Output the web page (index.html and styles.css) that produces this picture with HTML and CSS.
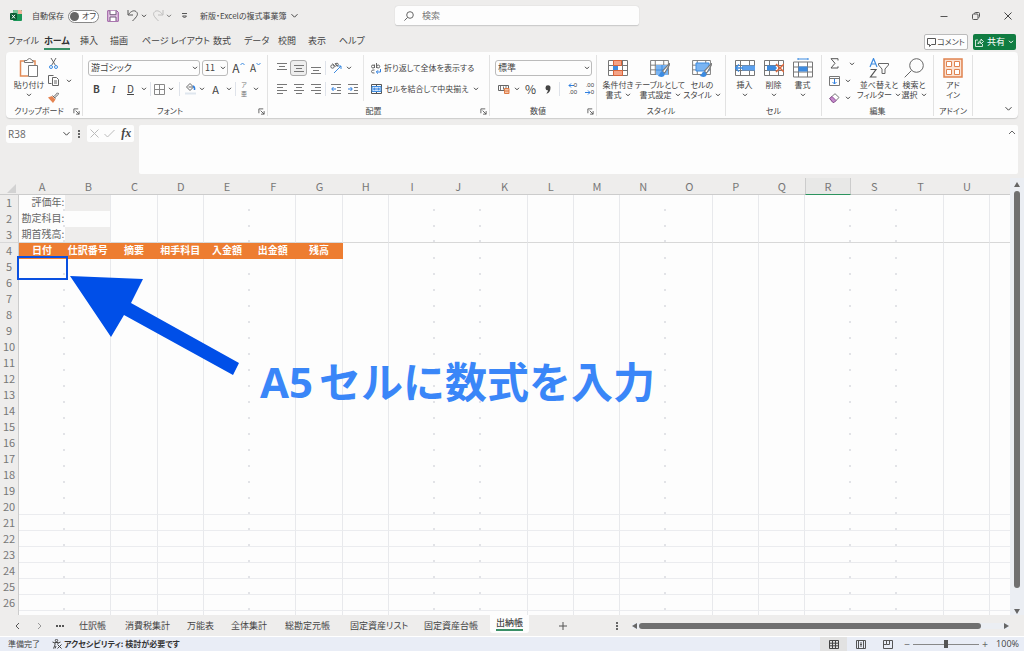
FILE: index.html
```html
<!DOCTYPE html>
<html lang="ja">
<head>
<meta charset="utf-8">
<title>新版・Excelの複式事業簿</title>
<link rel="stylesheet" href="styles.css">
</head>
<body>
<svg class="sprite" aria-hidden="true">
  <symbol id="chev" viewBox="0 0 6 4"><path d="M1 .8 3 2.8 5 .8" fill="none" stroke="currentColor" vector-effect="non-scaling-stroke"/></symbol>
  <symbol id="launch" viewBox="0 0 8 8"><path d="M1 6V1h5M3 3l4 4M7 3.500V7H3.500" fill="none" stroke="#555"/></symbol>
  <symbol id="al-left" viewBox="0 0 10 10"><path d="M0 .5h10M0 3.500h6M0 6.500h10M0 9.500h6" fill="none" stroke="#777"/></symbol>
  <symbol id="al-mid" viewBox="0 0 10 10"><path d="M0 .5h10M2 3.500h6M0 6.500h10M2 9.500h6" fill="none" stroke="#777"/></symbol>
  <symbol id="al-right" viewBox="0 0 10 10"><path d="M0 .5h10M4 3.500h6M0 6.500h10M4 9.500h6" fill="none" stroke="#777"/></symbol>
  <symbol id="v-line" viewBox="0 0 10 7"><path d="M0 .5h10M2 3.500h6M0 6.500h10" fill="none" stroke="#777"/></symbol>
  <symbol id="indent-out" viewBox="0 0 10 10"><path d="M0 .5h10M6 3.500h4M6 6.500h4M0 9.500h10" stroke="#777" fill="none"/><path d="M5 5H1M2.500 3 .7 5l1.800 2" stroke="#2f7fe0" fill="none"/></symbol>
  <symbol id="indent-in" viewBox="0 0 10 10"><path d="M0 .5h10M6 3.500h4M6 6.500h4M0 9.500h10" stroke="#777" fill="none"/><path d="M0 5h4M2.500 3l1.800 2-1.800 2" stroke="#2f7fe0" fill="none"/></symbol>
  <symbol id="grid3" viewBox="0 0 20 16"><path d="M.5.5h19v15H.5zM.5 5.500h19M.5 10.500h19M5.500.5v15M14.500.5v15" fill="#fff" stroke="#777"/></symbol>
  <symbol id="brush" viewBox="0 0 12 14"><path d="M11.500.5 5 7.500l2 2L11.500 2z" fill="#fff" stroke="#777"/><path d="M5 8C2.500 8 3 11 .5 12c3 2 7 1 6.500-2z" fill="#3d8be0"/></symbol>
</svg>

<header class="titlebar">
  <div class="title-left">
    <svg class="app" width="12" height="12" viewBox="0 0 12 12"><rect x="3" y="0" width="9" height="11" rx="1" fill="#1a9657"/><path d="M4 0h4v4H3V1z" fill="#7cc79b"/><path d="M8 0h3l1 1v3H8z" fill="#f0b49a"/><rect x="0" y="3" width="7" height="7" rx="1" fill="#0d5c33"/><path d="m2 4.800 3 3.600m0-3.600L2 8.400" stroke="#fff"/></svg>
    <label class="autosave" for="autosave">自動保存</label>
    <span class="switch"><input type="checkbox" id="autosave"><span>オフ</span></span>
    <button class="ic save" aria-label="上書き保存"><svg width="12" height="12" viewBox="0 0 12 12"><path d="M.7.7h9l1.600 1.600v9H.7z" fill="#e4c4e6" stroke="#9a5ba0"/><path d="M3 .7v4h6v-4M3 11V7h6v4" fill="#fff" stroke="#6f5a78"/></svg></button>
    <button class="ic undo" aria-label="元に戻す"><svg width="12" height="12" viewBox="0 0 12 12"><path d="M1 0v5h5M1.500 4.500C4 1 7 0 9 1.500c3 2.500 1 5-3.500 9.500" fill="none" stroke="#555"/></svg></button>
    <button class="ic drop" aria-label="元に戻す履歴"><svg width="6" height="4"><use href="#chev"/></svg></button>
    <button class="ic undo off" aria-label="やり直し"><svg width="12" height="12" viewBox="0 0 12 12"><path d="M11 0v5H6M10.500 4.500C8 1 5 0 3 1.500 0 4 2 6.500 6.500 11" fill="none" stroke="#aaa"/></svg></button>
    <button class="ic drop off" aria-label="やり直し履歴"><svg width="6" height="4"><use href="#chev"/></svg></button>
    <button class="ic qat" aria-label="クイックアクセスのカスタマイズ"><svg width="7" height="6" viewBox="0 0 7 6"><path d="M1 .5h5M1.500 3h4l-2 2z" fill="none" stroke="#555"/></svg></button>
    <button class="doc">新版・Excelの複式事業簿<svg width="9" height="6"><use href="#chev"/></svg></button>
  </div>
  <div class="search">
    <svg width="10" height="10" viewBox="0 0 10 10"><circle cx="6" cy="4" r="3.300" fill="none" stroke="#666"/><path d="M3.600 6.400.4 9.600" stroke="#666"/></svg>
    <input type="search" aria-label="検索" placeholder="検索">
  </div>
  <div class="window">
    <button aria-label="最小化"><svg width="8" height="8" viewBox="0 0 8 8"><path d="M.5 4.500h7" stroke="#555"/></svg></button>
    <button aria-label="元のサイズに戻す"><svg width="8" height="8" viewBox="0 0 8 8"><rect x=".5" y="2" width="5.500" height="5.500" rx="1" fill="none" stroke="#555"/><path d="M2.500 1.800V1.500Q2.500.5 3.500.5h3q1 0 1 1v3q0 1-1 1" fill="none" stroke="#555"/></svg></button>
    <button aria-label="閉じる"><svg width="8" height="8" viewBox="0 0 8 8"><path d="m.5.5 7 7m0-7-7 7" stroke="#444"/></svg></button>
  </div>
</header>

<nav class="tabs">
  <div class="tablist">
    <button>ファイル</button><button class="on">ホーム</button><button>挿入</button><button>描画</button><button>ページ レイアウト</button><button>数式</button><button>データ</button><button>校閲</button><button>表示</button><button>ヘルプ</button>
  </div>
  <button class="comment"><svg width="9" height="9" viewBox="0 0 9 9"><path d="M.5.500h8v6H4.500l-2 2v-2h-2z" fill="none" stroke="#555"/></svg>コメント</button>
  <button class="share"><svg width="9" height="9" viewBox="0 0 9 9"><path d="M3 2H.5v6.500h7V6M3 6c0-2 1-3 3-3V1l2.500 2.500L6 6V4.500C4.500 4.500 3.500 5 3 6z" fill="none" stroke="#fff" stroke-width=".8"/></svg>共有<svg width="6" height="4"><use href="#chev"/></svg></button>
</nav>

<section class="ribbon">
  <div class="group g-clip">
    <div class="body">
      <button class="big paste"><svg width="20" height="20" viewBox="0 0 20 20"><path d="M6 3H1.500v15H9M13 3h3v4" fill="none" stroke="#e28a55" stroke-width="1.500"/><path d="M5.500 4.500V2.500h2.500Q9 .5 10.500.500T13 2.500h1v2zM9.500 7.500h9v11h-9z" fill="#fff" stroke="#777"/></svg><span>貼り付け</span><svg class="cv" width="6" height="4"><use href="#chev"/></svg></button>
      <div class="stack">
        <div><button class="ic" aria-label="切り取り"><svg width="9" height="11" viewBox="0 0 9 11"><path d="m2 0 4.500 7.500M7 0 2.500 7.500" stroke="#666"/><circle cx="2" cy="9" r="1.500" fill="none" stroke="#3d8be0"/><circle cx="7" cy="9" r="1.500" fill="none" stroke="#3d8be0"/></svg></button></div>
        <div><button class="ic" aria-label="コピー"><svg width="11" height="11" viewBox="0 0 11 11"><path d="M3.500 8.500h-3v-8h5M4.500 2.500h4l2 2v6h-6zM6 6h3M6 8h3" fill="none" stroke="#666"/></svg></button><button class="ic drop copy" aria-label="コピーのオプション"><svg width="6" height="4"><use href="#chev"/></svg></button></div>
        <div><button class="ic" aria-label="書式のコピー"><svg width="11" height="11" viewBox="0 0 11 11"><path d="M0 5.500 4 4l3.500 3.500L5 11z" fill="#e58350"/><path d="m4.500 3.500 3 3M6 4.500 9.500.800l1.200 1.200L7 5.500" fill="#fff" stroke="#666"/></svg></button></div>
      </div>
    </div>
    <div class="cap"><span>クリップボード</span><button aria-label="クリップボードの詳細"><svg width="7" height="7"><use href="#launch"/></svg></button></div>
  </div>

  <div class="group g-font">
    <div class="body rows">
      <div class="row">
        <span class="sel font"><select aria-label="フォント"><option>游ゴシック</option></select><svg width="6" height="4"><use href="#chev"/></svg></span>
        <span class="sel size"><select aria-label="フォント サイズ"><option>11</option></select><svg width="6" height="4"><use href="#chev"/></svg></span>
        <button class="ic letter" aria-label="フォント サイズの拡大">A<svg width="5" height="4" viewBox="0 0 5 4"><path d="M.5 3 2.500 1l2 2" fill="none" stroke="#3d8be0"/></svg></button>
        <button class="ic letter small" aria-label="フォント サイズの縮小">A<svg width="5" height="4" viewBox="0 0 5 4"><path d="m.5 1 2 2 2-2" fill="none" stroke="#3d8be0"/></svg></button>
      </div>
      <div class="row">
        <button class="ic"><b>B</b></button><button class="ic it">I</button><button class="ic ul">D</button><button class="ic drop" aria-label="下線の種類"><svg width="6" height="4"><use href="#chev"/></svg></button><i class="sep"></i>
        <button class="ic n" aria-label="罫線"><svg width="11" height="11" viewBox="0 0 11 11"><path d="M.5.5h10v10H.5zM5.500.5v10M.5 5.500h10" fill="none" stroke="#888"/></svg></button><button class="ic drop" aria-label="罫線の種類"><svg width="6" height="4"><use href="#chev"/></svg></button><i class="sep wide"></i>
        <button class="ic n" aria-label="塗りつぶしの色"><svg width="11" height="12" viewBox="0 0 11 12"><path d="M5 .5 8.500 4 5 7.500 1.500 4zM3.500 4h4" fill="none" stroke="#666"/><path d="M8 3q2 1 1.500 4" fill="none" stroke="#2f7fe0" stroke-width="1.500"/><path d="M0 9.500h11v2H0z" fill="#dfe6ee"/></svg></button><button class="ic drop" aria-label="塗りつぶしの色の一覧"><svg width="6" height="4"><use href="#chev"/></svg></button>
        <button class="ic fa">A</button><button class="ic drop" aria-label="フォントの色の一覧"><svg width="6" height="4"><use href="#chev"/></svg></button><i class="sep"></i>
        <button class="ic n ruby"><span>ア</span><span>亜</span></button><button class="ic drop" aria-label="ふりがなのオプション"><svg width="6" height="4"><use href="#chev"/></svg></button>
      </div>
    </div>
    <div class="cap"><span>フォント</span><button aria-label="フォントの詳細"><svg width="7" height="7"><use href="#launch"/></svg></button></div>
  </div>

  <div class="group g-align">
    <div class="body">
      <div class="rows a-left">
        <div class="row">
          <button class="ic top" aria-label="上揃え"><svg width="10" height="7"><use href="#v-line"/></svg></button><button class="ic pressed" aria-label="上下中央揃え"><svg width="10" height="7"><use href="#v-line"/></svg></button><button class="ic bottom" aria-label="下揃え"><svg width="10" height="7"><use href="#v-line"/></svg></button><i class="sep"></i>
          <button class="ic" aria-label="方向"><svg width="12" height="12" viewBox="0 0 12 12"><circle cx="2.500" cy="4.500" r="1.700" fill="none" stroke="#666"/><path d="m2.500 1.500 3 3.500M5 1l2.500 3.500" stroke="#666"/><circle cx="7" cy="2.500" r="1.300" fill="none" stroke="#666"/><path d="m4 11 7-7M8 4h3v3" fill="none" stroke="#3d8be0"/></svg></button><button class="ic drop" aria-label="方向の種類"><svg width="6" height="4"><use href="#chev"/></svg></button>
        </div>
        <div class="row">
          <button class="ic" aria-label="左揃え"><svg width="10" height="10"><use href="#al-left"/></svg></button><button class="ic" aria-label="中央揃え"><svg width="10" height="10"><use href="#al-mid"/></svg></button><button class="ic" aria-label="右揃え"><svg width="10" height="10"><use href="#al-right"/></svg></button><i class="sep"></i>
          <button class="ic" aria-label="インデントを減らす"><svg width="10" height="10"><use href="#indent-out"/></svg></button><button class="ic" aria-label="インデントを増やす"><svg width="10" height="10"><use href="#indent-in"/></svg></button>
        </div>
      </div>
      <div class="rows a-right">
        <div class="row"><button class="text"><svg width="10" height="11" viewBox="0 0 10 11"><circle cx="2" cy="3.500" r="1.500" fill="none" stroke="#666"/><path d="M3.500 1.500V5M5.500 0v5" stroke="#666"/><circle cx="7.200" cy="3.500" r="1.500" fill="none" stroke="#666"/><path d="M3.500 7Q.5 6.500.5 8.500t3 1.500" fill="none" stroke="#666"/><path d="M9.500 6v3H5.500M7 7.300 5.300 9 7 10.700" fill="none" stroke="#2f7fe0"/></svg>折り返して全体を表示する</button></div>
        <div class="row"><button class="text"><svg width="11" height="10" viewBox="0 0 11 10"><path d="M.5.5h10v9H.5zM5.500.5v9" fill="none" stroke="#555"/><path d="M1 2.500h9v5H1z" fill="#d3e6fa" stroke="#3d8be0"/><path d="M2.500 5h6M4 3.800 2.500 5 4 6.200M7 3.800 8.500 5 7 6.200" fill="none" stroke="#2f7fe0"/></svg>セルを結合して中央揃え</button><button class="ic drop end" aria-label="結合のオプション"><svg width="6" height="4"><use href="#chev"/></svg></button></div>
      </div>
    </div>
    <div class="cap"><span>配置</span><button aria-label="配置の詳細"><svg width="7" height="7"><use href="#launch"/></svg></button></div>
  </div>

  <div class="group g-num">
    <div class="body rows">
      <div class="row"><span class="sel num"><select aria-label="数値の書式"><option>標準</option></select><svg width="6" height="4"><use href="#chev"/></svg></span></div>
      <div class="row">
        <button class="ic" aria-label="通貨表示形式"><svg width="12" height="10" viewBox="0 0 12 10"><path d="M.5 1.500h10v5H.5z" fill="none" stroke="#666"/><path d="M2.500 2v4M5.500 2.500v3M8 2v3" stroke="#777"/><path d="M6.500 4.500H11v5H6.500z" fill="#f6c5a8" stroke="#dd7a44"/><path d="M6.500 7H11" stroke="#dd7a44"/></svg></button><button class="ic drop" aria-label="通貨の種類"><svg width="6" height="4"><use href="#chev"/></svg></button>
        <button class="ic pct">%</button><button class="ic" aria-label="桁区切り"><svg width="6" height="9" viewBox="0 0 6 9"><path d="M5.500 2.800C5.500 6 4 8 1.500 8.800 1 8.500 3 7 3 5.200A2.500 2.500 0 1 1 5.500 2.800z" fill="#444"/></svg></button><i class="sep wide"></i>
        <button class="ic n dec" aria-label="小数点以下の表示桁数を増やす"><span><svg width="6" height="5" viewBox="0 0 6 5"><path d="M6 2.500H1M3 .5l-2 2 2 2" fill="none" stroke="#2f7fe0"/></svg>0</span><span>.00</span></button><button class="ic dec" aria-label="小数点以下の表示桁数を減らす"><span>.00</span><span><svg width="6" height="5" viewBox="0 0 6 5"><path d="M0 2.500h5M3 .5l2 2-2 2" fill="none" stroke="#2f7fe0"/></svg>0</span></button>
      </div>
    </div>
    <div class="cap"><span>数値</span><button aria-label="数値の詳細"><svg width="7" height="7"><use href="#launch"/></svg></button></div>
  </div>

  <div class="group g-style">
    <div class="body">
      <button class="big"><svg width="20" height="20" viewBox="0 0 20 20"><use href="#grid3" y="2" width="20" height="16"/><path d="M5.500 2.500h8v5h-8zM5.500 12.500h9v5h-9z" fill="#f3a387" stroke="#d9653a"/><path d="M5 8h5v4H5z" fill="#3d8be0"/></svg><span>条件付き</span><span>書式<svg width="6" height="4"><use href="#chev"/></svg></span></button>
      <button class="big"><svg width="21" height="20" viewBox="0 0 21 20"><use href="#grid3" y="2" width="19" height="15"/><path d="M6 7h12v10H6z" fill="#7ab4f2"/><path d="M6 12h12M12 7v10" stroke="#3d8be0"/><use href="#brush" x="7" y="5" width="13" height="15"/></svg><span>テーブルとして</span><span>書式設定<svg width="6" height="4"><use href="#chev"/></svg></span></button>
      <button class="big"><svg width="21" height="20" viewBox="0 0 21 20"><use href="#grid3" y="2" width="19" height="15"/><path d="M4 5h13v8H4z" fill="#7ab4f2" stroke="#3d8be0"/><use href="#brush" x="7" y="5" width="13" height="15"/></svg><span>セルの</span><span>スタイル<svg width="6" height="4"><use href="#chev"/></svg></span></button>
    </div>
    <div class="cap"><span>スタイル</span></div>
  </div>

  <div class="group g-cell">
    <div class="body">
      <button class="big"><svg width="20" height="20" viewBox="0 0 20 20"><use href="#grid3" y="2" width="20" height="16"/><path d="M7 7.500h13v5H7z" fill="#5ba0ee"/><path d="M8 10H1M4 6.500.5 10 4 13.500" fill="none" stroke="#3d8be0" stroke-width="1.500"/></svg><span>挿入</span><svg class="cv" width="6" height="4"><use href="#chev"/></svg></button>
      <button class="big"><svg width="20" height="20" viewBox="0 0 20 20"><use href="#grid3" y="2" width="20" height="16"/><path d="M3 7.500h8L13 10l-2 2.500H3z" fill="#3d8be0"/><path d="m12 6 8 8m0-8-8 8" stroke="#e0663a" stroke-width="1.500"/></svg><span>削除</span><svg class="cv" width="6" height="4"><use href="#chev"/></svg></button>
      <button class="big"><svg width="20" height="20" viewBox="0 0 20 20"><use href="#grid3" y="3" width="20" height="17"/><path d="M5.500 8.500h9v5h-9z" fill="#3d8be0"/><path d="M5 1h10M5 0v2M15 0v2" stroke="#3d8be0"/></svg><span>書式</span><svg class="cv" width="6" height="4"><use href="#chev"/></svg></button>
    </div>
    <div class="cap"><span>セル</span></div>
  </div>

  <div class="group g-edit">
    <div class="body">
      <div class="stack">
        <div><button class="ic" aria-label="オート SUM"><svg width="9" height="11" viewBox="0 0 9 11"><path d="M8 2.500V.7H1L5 5.300 1 10h7V8.300" fill="none" stroke="#555"/></svg></button><button class="ic drop far" aria-label="オート SUM のオプション"><svg width="6" height="4"><use href="#chev"/></svg></button></div>
        <div><button class="ic" aria-label="フィル"><svg width="11" height="10" viewBox="0 0 11 10"><path d="M.5.500h10v9H.5zM.5 2.500h10" fill="none" stroke="#777"/><path d="M5.500 3v5M3.500 6l2 2 2-2" fill="none" stroke="#2f7fe0"/></svg></button><button class="ic drop" aria-label="フィルのオプション"><svg width="6" height="4"><use href="#chev"/></svg></button></div>
        <div><button class="ic" aria-label="クリア"><svg width="11" height="10" viewBox="0 0 11 10"><path d="M.7 5.500 6 .7 10 4.500 5 9.500H4z" fill="#fff" stroke="#777"/><path d="M.7 5.500 3 3.500l4 4-2 2H4z" fill="#c58acb" stroke="#8d4f95"/></svg></button><button class="ic drop" aria-label="クリアのオプション"><svg width="6" height="4"><use href="#chev"/></svg></button></div>
      </div>
      <button class="big sort"><svg width="20" height="20" viewBox="0 0 20 20"><path d="M1 9 4.500.5 8 9M2.200 6h4.600" fill="none" stroke="#3d8be0" stroke-width="1.200"/><path d="M1.500 11.500h5.500L1.500 19H7.500" fill="none" stroke="#555" stroke-width="1.200"/><path d="M9.500 5.500h10v1.500L16 11v4.500h-3V11L9.500 7z" fill="none" stroke="#666"/></svg><span>並べ替えと</span><span>フィルター<svg width="6" height="4"><use href="#chev"/></svg></span></button>
      <button class="big find"><svg width="20" height="20" viewBox="0 0 20 20"><circle cx="12.500" cy="7.500" r="6.800" fill="none" stroke="#666"/><path d="M7.500 12.500.7 19.300" stroke="#666"/></svg><span>検索と</span><span>選択<svg width="6" height="4"><use href="#chev"/></svg></span></button>
    </div>
    <div class="cap"><span>編集</span></div>
  </div>

  <div class="group g-addin">
    <div class="body">
      <button class="big"><svg width="20" height="20" viewBox="0 0 20 20"><path d="M1 1h18v18H1z" fill="#fbe3d4" stroke="#e0834f" stroke-width="1.500"/><path d="M3.500 3.500h5v5h-5zM11.500 3.500h5v5h-5zM3.500 11.500h5v5h-5zM11.500 11.500h5v5h-5z" fill="#fff" stroke="#e0834f"/></svg><span>アド</span><span>イン</span></button>
    </div>
    <div class="cap"><span>アドイン</span></div>
  </div>
  <button class="collapse" aria-label="リボンを折りたたむ"><svg width="9" height="6"><use href="#chev"/></svg></button>
</section>

<section class="formula">
  <div class="namebox"><input aria-label="名前ボックス" value="R38"><svg width="9" height="6"><use href="#chev"/></svg></div>
  <svg class="dots" width="2" height="8" viewBox="0 0 2 8"><path d="M0 0h2v2H0zM0 3h2v2H0zM0 6h2v2H0z" fill="#666"/></svg>
  <div class="fx">
    <button aria-label="キャンセル"><svg width="9" height="9" viewBox="0 0 9 9"><path d="m.5.5 8 8m0-8-8 8" stroke="#bbb"/></svg></button>
    <button aria-label="入力"><svg width="11" height="9" viewBox="0 0 11 9"><path d="m.5 5 3 3 7-7" fill="none" stroke="#bbb"/></svg></button>
    <button class="fn">fx</button>
  </div>
  <div class="bar"><textarea aria-label="数式バー"></textarea><svg width="8" height="6" viewBox="0 0 8 6"><path d="m1 5 3-3 3 3" fill="none" stroke="#666"/></svg></div>
</section>

<main class="sheet">
  <div class="cells">
    <table>
      <colgroup><col class="c-num"><col span="21"><col class="c-rest"></colgroup>
      <thead><tr id="letters"></tr></thead>
      <tbody id="rows"></tbody>
    </table>
    <svg class="arrow" width="170" height="100" viewBox="0 0 170 100"><path d="M0 0 73 3 61 27 169 87 163 99 54 39 41 61z" fill="#004fe8"/></svg>
    <p class="note"><span class="ref">A5</span>セルに数式を入力</p>
  </div>
  <div class="vscroll"><i class="up"></i><i class="thumb"></i><i class="down"></i></div>
</main>

<footer class="sheets">
  <div class="sheetlist">
    <button aria-label="前のシート"><svg width="5" height="8" viewBox="0 0 5 8"><path d="M4 1 1 4l3 3" fill="none" stroke="#555"/></svg></button>
    <button aria-label="次のシート"><svg width="5" height="8" viewBox="0 0 5 8"><path d="m1 1 3 3-3 3" fill="none" stroke="#999"/></svg></button>
    <button class="all" aria-label="シート一覧"><svg width="8" height="2" viewBox="0 0 8 2"><path d="M0 0h2v2H0zM3 0h2v2H3zM6 0h2v2H6z" fill="#555"/></svg></button>
    <button class="nm">仕訳帳</button><button class="nm">消費税集計</button><button class="nm">万能表</button><button class="nm">全体集計</button><button class="nm">総勘定元帳</button><button class="nm">固定資産リスト</button><button class="nm">固定資産台帳</button><button class="active"><span>出納帳</span></button>
    <button class="add" aria-label="新しいシート"><svg width="8" height="8" viewBox="0 0 8 8"><path d="M4 0v8M0 4h8" stroke="#555"/></svg></button>
  </div>
  <div class="hscroll">
    <svg width="2" height="8" viewBox="0 0 2 8"><path d="M0 0h2v2H0zM0 3h2v2H0zM0 6h2v2H0z" fill="#666"/></svg>
    <div class="track"><i class="left"></i><i class="hthumb"></i><i class="right"></i></div>
  </div>
</footer>

<div class="status">
  <span>準備完了</span>
  <button class="acc"><svg width="10" height="10" viewBox="0 0 10 10"><circle cx="4.500" cy="1.500" r="1.200" fill="none" stroke="#444"/><path d="M.5 3 3 4v2L1.500 9.500M8.500 3 6 4v1M3 3.500h3M4 7 3 9.500M5.500 5.500l4 4m0-4-4 4" fill="none" stroke="#444"/></svg>アクセシビリティ: 検討が必要です</button>
  <div class="views">
    <button class="cur" aria-label="標準"><svg width="10" height="9" viewBox="0 0 10 9"><path d="M.5.500h9v8h-9zM3.500.5v8M6.500.5v8M.5 3.200h9M.5 5.800h9" fill="none" stroke="#444"/></svg></button>
    <button aria-label="ページ レイアウト"><svg width="10" height="9" viewBox="0 0 10 9"><path d="M.5.500h9v8h-9zM2.500.5v8M7.500.5v8M4 3h2M4 4.500h2M4 6h2" fill="none" stroke="#555"/></svg></button>
    <button aria-label="改ページ プレビュー"><svg width="10" height="9" viewBox="0 0 10 9"><path d="M.5.500h9v8h-9zM3.500.5v4h3v-4M.5 4.500h3" fill="none" stroke="#555"/></svg></button>
    <span class="zm">−</span><input type="range" aria-label="ズーム" min="0" max="100" value="50"><span class="zm">+</span><span class="zoom">100%</span>
  </div>
</div>
<script src="sheet.js"></script>
</body>
</html>
```
FILE: styles.css
```css
* { box-sizing: border-box; }
body {
  margin: 0;
  height: 100vh;
  display: flex;
  flex-direction: column;
  overflow: hidden;
  background: #eeedec;
  color: #444;
  font: 8px/10px "Noto Sans CJK JP", sans-serif;
  font-feature-settings: "palt";
}
button, input, select, textarea { font: inherit; font-feature-settings: inherit; color: inherit; margin: 0; }
button { background: none; border: 0; padding: 0; white-space: nowrap; }
svg { display: block; flex: none; }
.sprite { display: none; }

.titlebar { display: grid; grid-template-columns: 395fr 244fr 385fr; height: 32px; align-items: center; flex: none; }
.title-left { display: flex; align-items: center; padding-left: 10px; white-space: nowrap; }
.app { margin-right: 10px; }
.switch { display: flex; align-items: center; gap: 3px; width: 31px; height: 13px; margin: 0 8px 0 4px; padding-left: 1px; border: 1px solid #888; border-radius: 7px; background: #fff; }
.switch input { appearance: none; flex: none; width: 9px; height: 9px; border-radius: 50%; background: #666; }
.ic { display: inline-flex; align-items: center; justify-content: center; width: 17px; height: 16px; flex: none; }
.ic.drop { width: 10px; }
.ic.n { width: 14px; }
.ic.save { width: 12px; margin-right: 8px; }
.ic.undo { width: 12px; }
.off { opacity: .7; }
.ic.undo.off { margin-left: 3px; }
.ic.qat { width: 16px; margin: 0 8px 0 2px; }
.doc { display: flex; align-items: center; gap: 3px; }
.search { position: relative; height: 20px; }
.search svg { position: absolute; left: 9px; top: 5px; }
.search input { display: block; width: 100%; height: 20px; padding: 0 0 0 27px; border: 0; border-bottom: 1px solid #ccc; border-radius: 3px; background: #fdfdfd; font-size: 9px; outline: 0; box-shadow: 0 0 1px #bbb; }
.search input::placeholder { color: #777; opacity: 1; }
.window { display: flex; justify-content: flex-end; }
.window button { width: 32px; display: flex; justify-content: center; }

.tabs { display: flex; align-items: center; height: 20px; flex: none; padding: 0 8px; gap: 5px; font-size: 9px; }
.tablist { flex: 1; display: grid; grid-template-columns: 36px 36px 30px 32px 71px 31px 34px 30px 31px auto; text-align: left; }
.tablist button { justify-self: start; height: 16px; line-height: 14px; border-bottom: 2px solid transparent; }
.tablist .on { font-weight: 700; border-color: #3a8f66; color: #333; }
.comment, .share { display: flex; align-items: center; justify-content: center; gap: 3px; height: 16px; border-radius: 2px; font-size: 8px; }
.comment { width: 44px; gap: 1px; background: #fdfdfd; border: 1px solid #bbb; }
.share { width: 43px; background: #107c41; color: #fff; font-size: 9px; }

.ribbon { display: flex; flex: none; height: 66px; margin: 0 6px; background: #fdfdfd; border-radius: 4px; box-shadow: 0 1px 1px #ccc; }
.group { flex: none; display: flex; flex-direction: column; margin: 3px 0 2px; border-right: 1px solid #e2e2e2; }
.g-clip { width: 77px; }
.g-font { width: 185px; }
.g-align { width: 222px; }
.g-num { width: 107px; }
.g-style { width: 129px; }
.g-cell { width: 96px; }
.g-edit { width: 112px; }
.g-addin { width: 39px; }
.body { flex: 1; display: flex; }
.cap { position: relative; display: flex; justify-content: center; height: 10px; padding-right: 10px; }
.g-style .cap, .g-cell .cap, .g-edit .cap, .g-addin .cap { padding-right: 0; }
.cap button { position: absolute; right: 2px; top: 2px; }
.big { display: flex; flex-direction: column; align-items: center; width: 42px; padding-top: 3px; align-self: flex-start; }
.big > svg:first-child { margin-bottom: 2px; }
.big span { display: flex; align-items: center; gap: 3px; }
.big .cv { margin-top: 3px; }
.paste { width: 32px; margin: 0 0 0 7px; }
.g-cell .body { padding-left: 4px; }
.g-cell .big { width: 29px; }
.g-addin .big { width: 100%; }
.find { width: 28px; }
.stack { display: flex; flex-direction: column; }
.stack div { display: flex; align-items: center; height: 17px; }
.g-edit .stack { width: 33px; padding-left: 4px; }
.g-edit .sort { margin-left: 3px; }
.drop.far { margin-left: 4px; }
.drop.copy { margin-left: 2px; }
.rows { flex-direction: column; gap: 5px; padding: 5px 0 0 5px; display: flex; }
.row { display: flex; align-items: center; height: 16px; }
.sel { position: relative; display: block; margin-right: 2px; }
.sel select { appearance: none; display: block; width: 100%; height: 16px; padding: 0 0 0 2px; border: 1px solid #bbb; border-radius: 3px; background: #fdfdfd; font-size: 9px; outline: 0; }
.sel svg { position: absolute; right: 2px; top: 6px; }
.font { width: 112px; }
.size { width: 26px; }
.num { width: 97px; }
.letter { font-size: 12px; align-items: flex-start; line-height: 16px; }
.letter.small { font-size: 10px; }
.letter svg { margin-top: 2px; }
.g-font b { font-size: 10px; }
.it { font: italic 11px "Liberation Serif", serif; }
.ul { font-size: 10px; text-decoration: underline; }
.fa { font-size: 11px; }
.ruby { flex-direction: column; font-size: 6px; line-height: 9px; color: #777; }
.sep { width: 1px; height: 14px; margin: 0 1px; background: #dfe3ea; }
.sep.wide { margin: 0 3px; }
.a-left { width: 96px; border-right: 1px solid #e6e6e6; margin-bottom: 5px; }
.a-right { padding-left: 7px; flex: 1; }
.pressed { border: 1px solid #aaa; border-radius: 3px; background: #eee; }
.ic.top { align-items: flex-start; padding-top: 3px; }
.ic.bottom { align-items: flex-end; padding-bottom: 2px; }
.text { display: flex; align-items: center; gap: 3px; }
.end { margin-left: auto; margin-right: 8px; }
.pct { font-size: 12px; }
.dec { flex-direction: column; font: 6px/7px "Liberation Sans", sans-serif; align-items: flex-end; }
.dec span { display: flex; align-items: center; }
.collapse { margin: auto 5px 6px auto; }

.formula { display: flex; align-items: flex-start; flex: none; height: 56px; padding: 0 6px; margin-top: 7px; }
.namebox { position: relative; width: 66px; height: 18px; }
.namebox input { display: block; width: 100%; height: 18px; padding: 0 2px; border: 0; border-radius: 3px; background: #fdfdfd; font-family: "Open Sans", sans-serif; font-size: 10px; outline: 0; color: #666; }
.namebox svg { position: absolute; right: 1px; top: 6px; }
.dots { margin: 5px 6px; }
.fx { display: flex; align-items: center; justify-content: space-around; width: 47px; height: 17px; margin: 0 5px 0 1px; background: #fdfdfd; border-radius: 2px; }
.fn { font: italic bold 12px "Liberation Serif", serif; }
.bar { flex: 1; position: relative; height: 49px; }
.bar textarea { display: block; width: 100%; height: 49px; border: 0; border-radius: 2px; background: #fdfdfd; resize: none; outline: 0; font-size: 10px; }
.bar svg { position: absolute; right: 2px; top: 4px; }

.sheet { flex: 1; min-height: 0; display: flex; margin-top: -3px; }
.cells { flex: 1; position: relative; overflow: hidden; }
table { width: 100%; table-layout: fixed; border-collapse: separate; border-spacing: 0; font-size: 10px; line-height: 14px; }
.c-num { width: 19px; }
.c-rest { width: 20px; }
th, td { padding: 0; height: 16px; white-space: nowrap; overflow: visible; vertical-align: top; }
th { font-weight: 400; font-size: 11px; color: #777; }
thead th { height: 17px; border-bottom: 1px solid #ccc; vertical-align: middle; }
thead .cur { background: #e8e8e7; border-left: 1px solid #ccc; border-right: 1px solid #ccc; border-bottom-color: #2c935e; }
.corner svg { margin: 5px 0 0 7px; }
tbody th { border-right: 1px solid #ccc; }
td { position: relative; background: #fdfdfd; border-right: 1px solid #e8e9ec; color: #666; }
td.dot { border-right: 0; background: #fdfdfd linear-gradient(#e2e3e7, #e2e3e7) right bottom / 2px 2px no-repeat; }
td:last-child { border-right: 0; }
.frozen td, .frozen th { border-bottom: 1px solid #d8d8d8; }
.lined td { border-bottom: 1px solid #ebecef; }
td.label { text-align: right; padding-right: 1px; }
td.gray { background: #eeedec; }
td.head { background: #ed7d31; color: #fff; border-color: #ed7d31; font-weight: 700; text-align: center; }
td.picked::after { content: ""; position: absolute; left: -2px; top: -3px; right: -3px; height: 20px; border: 2px solid #0a50e0; z-index: 1; }
.arrow { position: absolute; left: 70px; top: 98px; }
.note { position: absolute; left: 260px; top: 180px; margin: 0; font-size: 42px; line-height: 44px; font-weight: 700; color: #3a86f8; white-space: nowrap; font-feature-settings: normal; }
.ref { font-family: "Open Sans", sans-serif; padding-right: 6px; }
.vscroll { flex: none; width: 14px; padding: 4px 0 1px; display: flex; flex-direction: column; align-items: center; background: #ebeef3; }
.up, .down { border: 3px solid transparent; }
.up { border-top: 0; border-bottom: 5px solid #666; }
.down { border-bottom: 0; border-top: 5px solid #666; }
.thumb { flex: 1; width: 6px; margin: 4px 0 21px; border-radius: 3px; background: #707070; }

.sheets { flex: none; display: flex; align-items: center; height: 22px; border-bottom: 1px solid #fff; }
.sheetlist { flex: 1; height: 21px; display: grid; grid-template-columns: 17px 26px 27px 46px 62px 44px 54px 65px 74px 66px 39px 1fr; padding-left: 9px; font-size: 9px; align-items: center; }
.sheetlist button { display: flex; justify-content: center; }
.sheetlist .nm { justify-content: flex-start; }
.sheetlist .all { justify-content: flex-start; padding-left: 4px; }
.sheetlist .active { align-self: start; height: 18px; padding-top: 3px; background: #fdfdfd; border-radius: 0 0 3px 3px; }
.active span { height: 13px; border-bottom: 2px solid #3a8f66; font-weight: 500; }
.add { width: 68px; }
.hscroll { flex: none; width: 40%; display: flex; align-items: center; gap: 14px; padding-right: 15px; padding-left: 2px; }
.track { flex: 1; display: flex; align-items: center; background: #ebeef3; }
.left, .right { border: 3px solid transparent; }
.left { border-left: 0; border-right: 5px solid #666; }
.right { border-right: 0; border-left: 5px solid #666; }
.hthumb { flex: 1; height: 6px; margin: 0 23px 0 2px; border-radius: 3px; background: #707070; }

.status { flex: none; display: flex; align-items: center; height: 14px; padding: 0 5px 0 8px; gap: 12px; background: #e9edf6; }
.acc { display: flex; align-items: center; gap: 2px; font-weight: 700; color: #333; }
.views { margin-left: auto; display: flex; align-items: center; }
.views button { width: 27px; height: 14px; display: flex; align-items: center; justify-content: center; }
.views .cur { background: #e2e2e2; }
.zm { width: 12px; text-align: center; font-size: 10px; color: #666; }
.views input { appearance: none; width: 66px; height: 10px; background: linear-gradient(#888, #888) center / 100% 1px no-repeat; }
.views input::-webkit-slider-thumb { appearance: none; width: 4px; height: 8px; background: #555; }
.zoom { width: 28px; font-family: "Open Sans", sans-serif; font-size: 9px; text-align: right; }
```
FILE: sheet.js
```js
const letters = 'ABCDEFGHIJKLMNOPQRSTU'.split('');
const selectedColumn = 'R';
const dottedColumns = 'AEIJNRS';
const labels = { 1: '評価年:', 2: '勘定科目:', 3: '期首残高:' };
const headings = ['日付', '仕訳番号', '摘要', '相手科目', '入金額', '出金額', '残高'];

const head = document.getElementById('letters');
head.innerHTML = '<th class="corner"><svg width="9" height="9" viewBox="0 0 9 9"><path d="M9 0v9H0z" fill="#d2d2d2"/></svg></th>' +
  letters.map(l => `<th scope="col"${l === selectedColumn ? ' class="cur"' : ''}>${l}</th>`).join('') + '<th></th>';

function cell(row, letter, index) {
  const classes = [];
  let text = '';
  if (dottedColumns.includes(letter)) classes.push('dot');
  if (index === 0 && labels[row]) { text = labels[row]; classes.push('label'); }
  if (letter === 'B' && (row === 1 || row === 3)) classes.push('gray');
  if (row === 4 && headings[index]) { text = headings[index]; classes.push('head'); }
  if (row === 5 && index === 0) classes.push('picked');
  return `<td class="${classes.join(' ')}">${text}</td>`;
}

let html = '';
for (let row = 1; row <= 27; row++) {
  const kind = row === 3 ? 'frozen' : row >= 20 ? 'lined' : '';
  html += `<tr class="${kind}"><th scope="row">${row < 27 ? row : ''}</th>` +
    letters.map((l, i) => cell(row, l, i)).join('') + '<td></td></tr>';
}
document.getElementById('rows').innerHTML = html;
```
